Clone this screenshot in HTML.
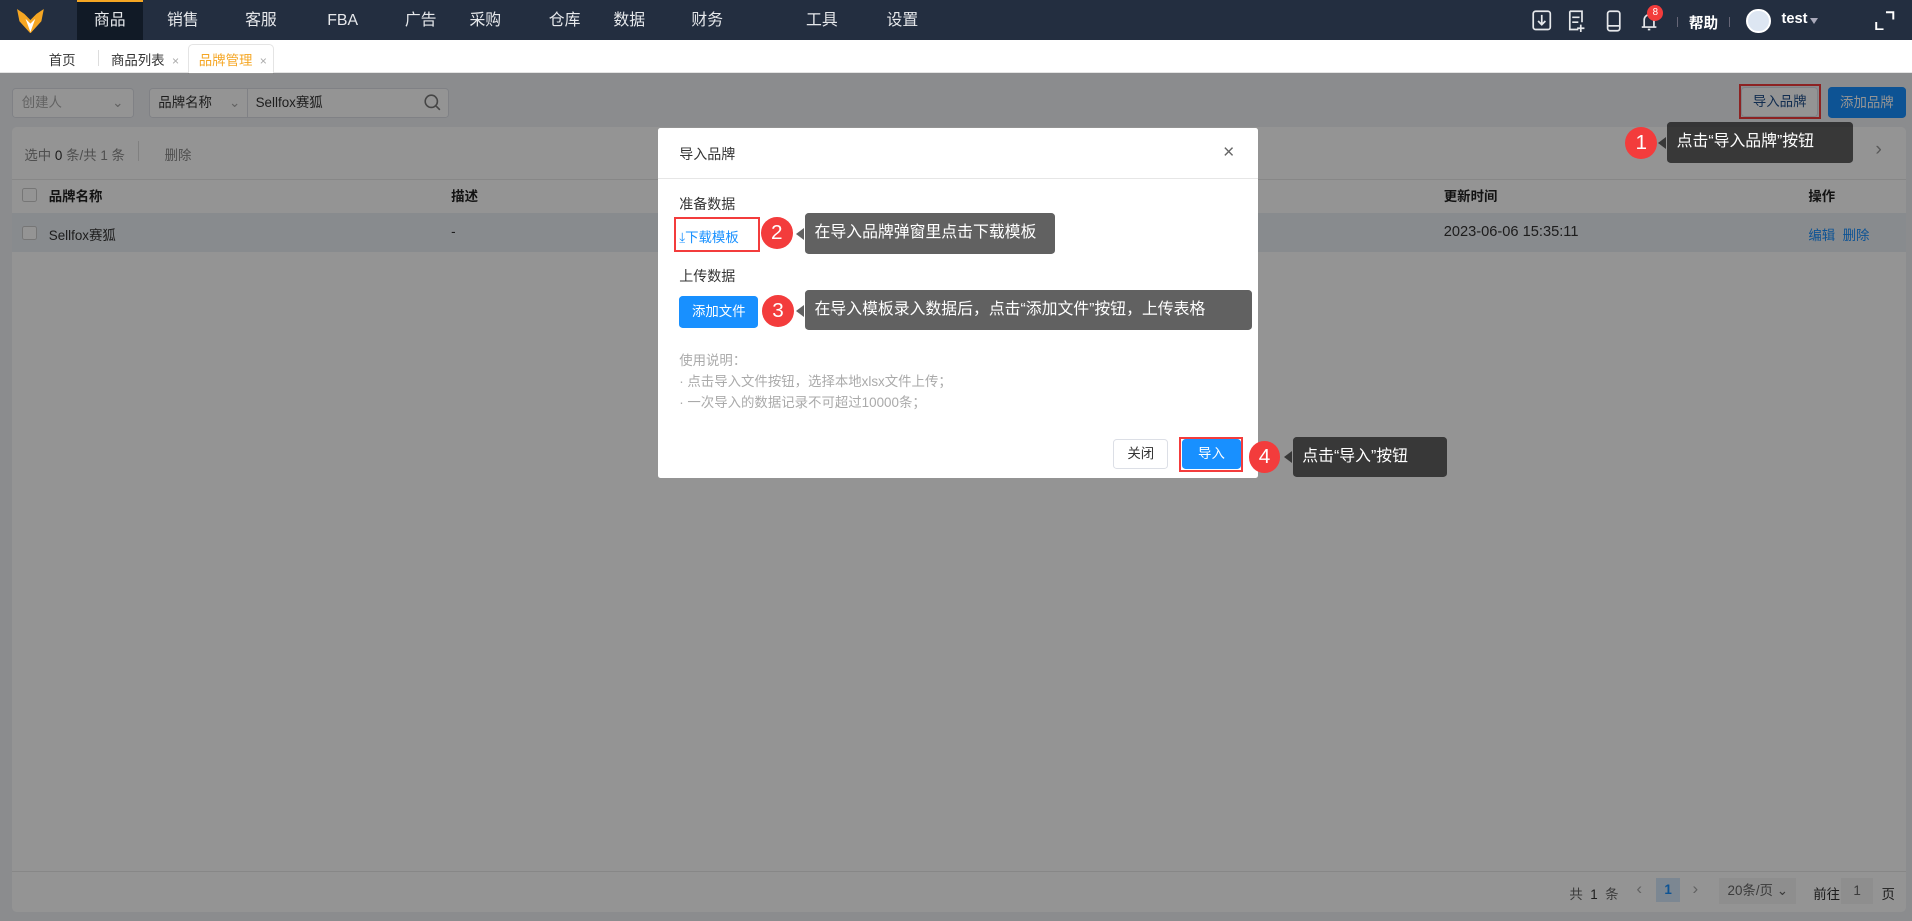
<!DOCTYPE html>
<html><head><meta charset="utf-8"><style>
*{box-sizing:border-box;margin:0;padding:0}
html,body{width:1912px;height:921px;overflow:hidden;background:#f0f2f5}
body{font-family:"Liberation Sans","Noto Sans CJK SC",sans-serif;font-size:11px;color:#333}
#w{zoom:1.219388;width:1568px;height:755px;position:relative;overflow:hidden}
.a{position:absolute}
.nav{left:0;top:0;width:1568px;height:33px;background:#232e40}
.ni{top:0;height:33px;line-height:35px;color:#e6e8eb;font-size:13px;text-align:center}
.tabs{left:0;top:33px;width:1568px;height:27px;background:#fff;border-bottom:1px solid #e4e4e4}
.ov{left:0;top:60px;width:1568px;height:695px;background:rgba(0,0,0,0.42)}
.tip{background:rgba(0,0,0,0.62);color:#fff;font-size:13px;border-radius:3px;line-height:33px;padding-left:8px}
.tip:before{content:"";position:absolute;left:-7px;top:12px;border:5px solid transparent;border-right:7px solid rgba(0,0,0,0.62);border-left:0}
.c{border-radius:50%;background:#f33c3c;color:#fff;font-size:17px;text-align:center;line-height:26px;width:26px;height:26px}
.btnb{background:#1890ff;color:#fff;border-radius:3px;text-align:center}
.m{font-size:11.5px}
</style></head><body><div id="w">
<div class="a nav"></div>
<svg class="a" style="left:14px;top:7px" width="22" height="20" viewBox="0 0 22 20"><path d="M0 0 L6 4 L11 9 L16 4 L22 0 L20 10 L11 20 L2 10Z" fill="#f5a623"/><path d="M7 8 L11 12 L15 8 L11 19Z" fill="#fff"/></svg>
<div class="a" style="left:63px;top:0;width:54px;height:33px;background:#111a26;border-top:2px solid #f5a623"></div>
<div class="a ni" style="left:63px;width:54px">商品</div>
<div class="a ni" style="left:130px;width:40px">销售</div>
<div class="a ni" style="left:194px;width:40px">客服</div>
<div class="a ni" style="left:261px;width:40px">FBA</div>
<div class="a ni" style="left:325px;width:40px">广告</div>
<div class="a ni" style="left:378px;width:40px">采购</div>
<div class="a ni" style="left:443px;width:40px">仓库</div>
<div class="a ni" style="left:496px;width:40px">数据</div>
<div class="a ni" style="left:560px;width:40px">财务</div>
<div class="a ni" style="left:654px;width:40px">工具</div>
<div class="a ni" style="left:720px;width:40px">设置</div>
<svg class="a" style="left:1256px;top:8px" width="120" height="18" fill="none" stroke="#e6e8eb" stroke-width="1.4">
<rect x="1" y="1" width="14" height="15" rx="2"/><path d="M8 4v8M5 9l3 3 3-3"/>
<path d="M31 1h10v9M31 1v15h7M33 6h6M33 10h5M40 12v6M37 15h6"/>
<rect x="62" y="1" width="10" height="16" rx="2"/><path d="M62 13h10"/>
<path d="M90 14h12M92 14V8a4 4 0 0 1 8 0v6M95 16h2"/></svg>
<div class="a" style="left:1351px;top:4px;width:13px;height:13px;border-radius:50%;background:#f33c3c;color:#fff;font-size:8px;text-align:center;line-height:13px">8</div>
<div class="a" style="left:1375px;top:14px;width:1px;height:8px;background:#667"></div>
<div class="a" style="left:1385px;top:10px;color:#fff;font-size:12px;font-weight:bold">帮助</div>
<div class="a" style="left:1418px;top:14px;width:1px;height:8px;background:#667"></div>
<div class="a" style="left:1432px;top:7px;width:20px;height:20px;border-radius:50%;background:#dde6f2;border:2px solid #fff"></div>
<div class="a" style="left:1461px;top:9px;color:#fff;font-size:12px;font-weight:bold">test</div>
<div class="a" style="left:1484px;top:15px;border:4px solid transparent;border-top:5px solid #aab;"></div>
<svg class="a" style="left:1538px;top:9px" width="16" height="16" fill="none" stroke="#fff" stroke-width="1.6"><path d="M9 1h6v6M1 9v6h6"/></svg>
<div class="a tabs"></div>
<div class="a" style="left:40px;top:40px">首页</div>
<div class="a" style="left:80px;top:41px;width:1px;height:13px;background:#ddd"></div>
<div class="a" style="left:91px;top:40px">商品列表 <span style="color:#aaa;font-size:10px;margin-left:3px">×</span></div>
<div class="a" style="left:154px;top:36px;width:71px;height:25px;background:#fff;border:1px solid #e4e4e4;border-bottom:none;border-radius:4px 4px 0 0"></div>
<div class="a" style="left:163px;top:40px;color:#f5a623">品牌管理 <span style="color:#aaa;font-size:10px;margin-left:3px">×</span></div>
<!-- page -->
<div class="a" style="left:10px;top:72px;width:100px;height:25px;background:#fff;border:1px solid #dcdfe6;border-radius:3px;color:#aaa;line-height:23px;padding-left:7px">创建人<span style="position:absolute;right:8px;color:#aaa">⌄</span></div>
<div class="a" style="left:122px;top:72px;width:246px;height:25px;background:#fff;border:1px solid #dcdfe6;border-radius:3px;line-height:23px"><span style="margin-left:7px">品牌名称</span><span style="position:absolute;left:65px;color:#aaa">⌄</span><span style="position:absolute;left:80px;top:0;height:23px;border-left:1px solid #dcdfe6;padding-left:6px">Sellfox赛狐</span></div>
<svg class="a" style="left:348px;top:77px" width="14" height="14" fill="none" stroke="#777" stroke-width="1.3"><circle cx="6" cy="6" r="5"/><path d="M10 10l3 3"/></svg>
<div class="a" style="left:1428px;top:71px;width:63px;height:25px;background:#fff;border:1px solid #dcdfe6;border-radius:3px;text-align:center;line-height:23px;color:#1f4f8a">导入品牌</div>
<div class="a" style="left:1426px;top:69px;width:67px;height:29px;border:2px solid #f33c3c"></div>
<div class="a btnb" style="left:1499px;top:71px;width:64px;height:26px;line-height:26px">添加品牌</div>
<div class="a" style="left:10px;top:104px;width:1553px;height:644px;background:#fff;border-radius:4px"></div>
<div class="a" style="left:20px;top:118px;color:#888">选中 <span style="color:#333">0</span> 条/共 1 条</div>
<div class="a" style="left:113px;top:116px;width:1px;height:16px;background:#ddd"></div>
<div class="a" style="left:135px;top:118px;color:#888">删除</div>
<div class="a" style="left:1538px;top:113px;color:#999;font-size:16px">›</div>
<div class="a" style="left:10px;top:147px;width:1553px;height:1px;background:#e8e8e8"></div>
<div class="a" style="left:10px;top:175px;width:1553px;height:32px;background:#ebeff5"></div>
<div class="a" style="left:18px;top:154px;width:12px;height:12px;border:1px solid #ccc;border-radius:2px;background:#fff"></div>
<div class="a" style="left:18px;top:185px;width:12px;height:12px;border:1px solid #ccc;border-radius:2px;background:#fff"></div>
<div class="a" style="left:40px;top:152px;font-weight:bold;color:#222">品牌名称</div>
<div class="a" style="left:370px;top:152px;font-weight:bold;color:#222">描述</div>
<div class="a" style="left:1184px;top:152px;font-weight:bold;color:#222">更新时间</div>
<div class="a" style="left:1483px;top:152px;font-weight:bold;color:#222">操作</div>
<div class="a" style="left:40px;top:184px">Sellfox赛狐</div>
<div class="a" style="left:370px;top:184px">-</div>
<div class="a" style="left:1184px;top:184px;font-size:12px">2023-06-06 15:35:11</div>
<div class="a" style="left:1483px;top:184px;color:#1890ff">编辑 &nbsp;删除</div>
<div class="a" style="left:10px;top:714px;width:1553px;height:1px;background:#e8e8e8"></div>
<div class="a" style="left:1287px;top:724px;color:#666">共 <span style="color:#333">&nbsp;1&nbsp;</span> 条</div>
<div class="a" style="left:1342px;top:721px;color:#aaa;font-size:14px">‹</div>
<div class="a" style="left:1358px;top:720px;width:20px;height:20px;background:#d6e8fb;color:#1890ff;text-align:center;line-height:20px;font-weight:bold">1</div>
<div class="a" style="left:1388px;top:721px;color:#aaa;font-size:14px">›</div>
<div class="a" style="left:1410px;top:720px;width:63px;height:21px;background:#f5f5f5;line-height:21px;text-align:center;color:#666">20条/页 ⌄</div>
<div class="a" style="left:1487px;top:724px">前往</div>
<div class="a" style="left:1510px;top:720px;width:26px;height:21px;background:#f5f5f5;line-height:21px;text-align:center;color:#666">1</div>
<div class="a" style="left:1543px;top:724px">页</div>
<div class="a ov"></div>
<!-- modal -->
<div class="a" style="left:540px;top:105px;width:492px;height:287px;background:#fff;border-radius:2px"></div>
<div class="a m" style="left:557px;top:118px;color:#333">导入品牌</div>
<div class="a" style="left:1003px;top:116px;font-size:16px;color:#666">×</div>
<div class="a" style="left:540px;top:146px;width:492px;height:1px;background:#e6e6e6"></div>
<div class="a m" style="left:557px;top:159px">准备数据</div>
<div class="a" style="left:557px;top:185px;color:#1890ff">⤓下载模板</div>
<div class="a" style="left:553px;top:178px;width:70px;height:29px;border:2px solid #f33c3c"></div>
<div class="a m" style="left:557px;top:218px">上传数据</div>
<div class="a btnb" style="left:557px;top:243px;width:65px;height:26px;line-height:26px">添加文件</div>
<div class="a" style="left:557px;top:288px;color:#aaa;line-height:17px">使用说明：<br>· 点击导入文件按钮，选择本地xlsx文件上传；<br>· 一次导入的数据记录不可超过10000条；</div>
<div class="a" style="left:913px;top:360px;width:45px;height:25px;border:1px solid #dcdfe6;border-radius:3px;text-align:center;line-height:23px;font-size:11px">关闭</div>
<div class="a btnb" style="left:969px;top:360px;width:49px;height:25px;line-height:25px;font-size:11px">导入</div>
<div class="a" style="left:967px;top:358px;width:52px;height:29px;border:2px solid #f33c3c"></div>
<!-- annotations -->
<div class="a c" style="left:624px;top:178px">2</div>
<div class="a tip" style="left:660px;top:175px;width:205px;height:33px">在导入品牌弹窗里点击下载模板</div>
<div class="a c" style="left:625px;top:242px">3</div>
<div class="a tip" style="left:660px;top:238px;width:367px;height:33px">在导入模板录入数据后，点击“添加文件”按钮，上传表格</div>
<div class="a c" style="left:1333px;top:104px">1</div>
<div class="a tip" style="left:1367px;top:100px;width:153px;height:34px">点击“导入品牌”按钮</div>
<div class="a c" style="left:1024px;top:362px">4</div>
<div class="a tip" style="left:1060px;top:358px;width:127px;height:33px">点击“导入”按钮</div>
</div></body></html>
